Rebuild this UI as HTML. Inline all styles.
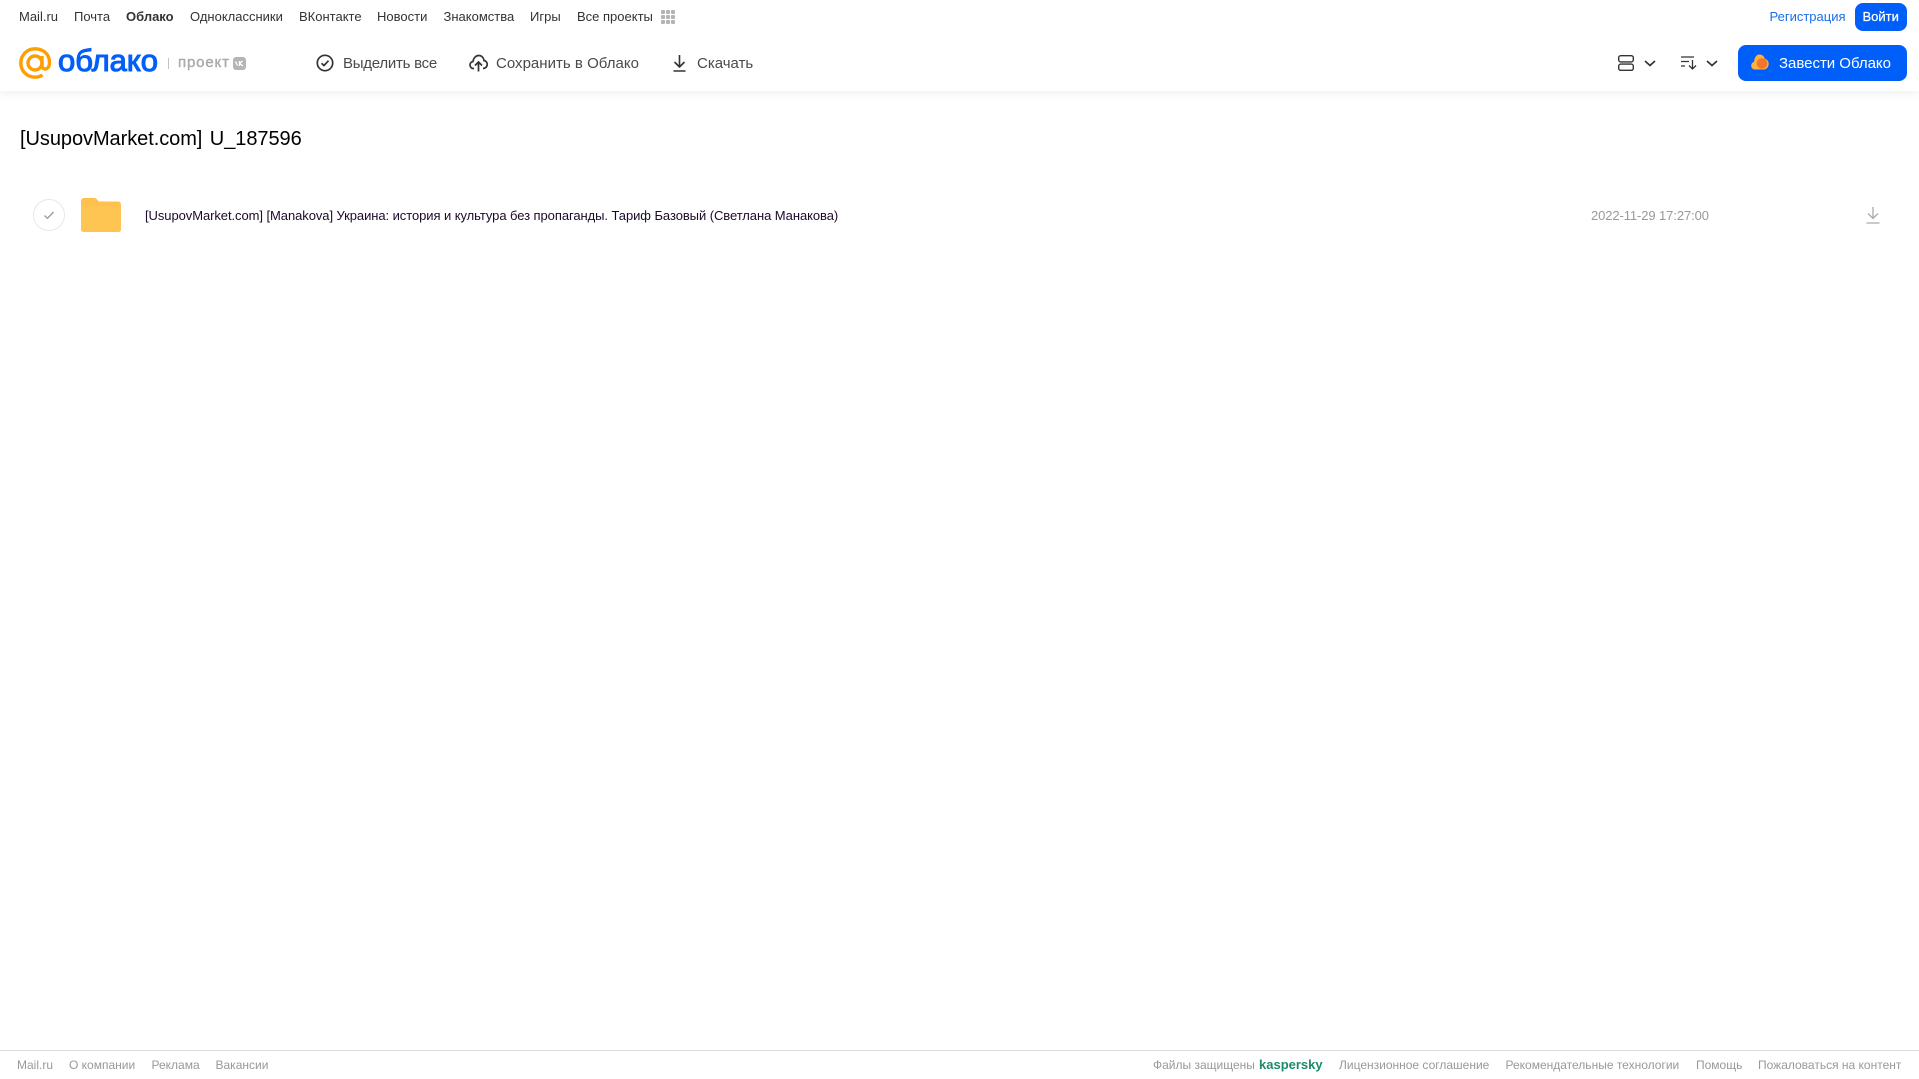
<!DOCTYPE html>
<html lang="ru"><head><meta charset="utf-8"><title>Облако</title>
<style>
html,body{margin:0;padding:0;background:#fff;width:1919px;height:1079px;overflow:hidden}
body{position:relative;font-family:"Liberation Sans",Arial,sans-serif}
.t{position:absolute;white-space:nowrap;line-height:18px}
.n{top:8px;font-size:13px;color:#333}
.b{top:55px;font-size:15px;color:#4a4a4a}
.f{top:1056px;font-size:12px;color:#999}
svg{position:absolute;overflow:visible}
#hd{position:absolute;left:0;top:0;width:1919px;height:91px;background:#fff;box-shadow:0 2px 10px rgba(0,0,0,.07)}
#ln{position:absolute;left:0;top:1050px;width:1919px;height:1px;background:#dcdcdc}
</style></head><body>
<div id="hd"></div>
<span class="t n" style="left:19px">Mail.ru</span>
<span class="t n" style="left:74px">Почта</span>
<span class="t n" style="left:126px;font-weight:bold">Облако</span>
<span class="t n" style="left:190px">Одноклассники</span>
<span class="t n" style="left:299px">ВКонтакте</span>
<span class="t n" style="left:377px">Новости</span>
<span class="t n" style="left:443.500px">Знакомства</span>
<span class="t n" style="left:530px">Игры</span>
<span class="t n" style="left:577px">Все проекты</span>
<svg style="left:661px;top:10px" width="15" height="15" fill="#b4b4b4"><rect width="4" height="4" rx="1"/><rect x="5" width="4" height="4" rx="1"/><rect x="10" width="4" height="4" rx="1"/><rect y="5" width="4" height="4" rx="1"/><rect x="5" y="5" width="4" height="4" rx="1"/><rect x="10" y="5" width="4" height="4" rx="1"/><rect y="10" width="4" height="4" rx="1"/><rect x="5" y="10" width="4" height="4" rx="1"/><rect x="10" y="10" width="4" height="4" rx="1"/></svg>

<svg style="left:19px;top:47px" width="33" height="33" fill="none" stroke="#ff9e00" stroke-width="3.400"><circle cx="16" cy="16" r="7"/><path d="M23 9v9.500c0 5 7.300 5 7.500-2.500C30.700 7.500 24.600 1.800 16 1.800 8 1.800 1.800 8 1.800 16S8 30.200 16 30.200c3 0 5.300-.7 7.500-2.100"/></svg>
<svg style="left:56px;top:44px" width="110" height="36"><text x="2" y="27" font-family="Liberation Sans" font-size="31" fill="#005ff9" stroke="#005ff9" stroke-width="1.100" textLength="100" lengthAdjust="spacingAndGlyphs">облако</text></svg>
<div style="position:absolute;left:168px;top:58px;width:1px;height:11px;background:#c4c4c4"></div>
<span class="t" style="left:178px;top:54px;font-size:15px;color:#a8abaf;-webkit-text-stroke:.4px #a8abaf;letter-spacing:.85px">проект</span>
<div style="position:absolute;left:233px;top:57px;width:13px;height:13px;border-radius:3px;background:#b3b5b8"></div>
<svg style="left:233px;top:57px" width="13" height="13" fill="none" stroke="#fff" stroke-width="1.300"><path d="M2.500 4.500 4.500 8.500M6.500 4v5M6.500 6.500 9.500 4M6.500 6.500 10 9"/></svg>

<svg style="left:316px;top:54px" width="18" height="18" fill="none" stroke="#333" stroke-width="1.700"><circle cx="9" cy="9" r="7.700"/><path d="M5.500 9.200 8 11.500l4.500-4.800"/></svg>
<span class="t b" style="left:343px;letter-spacing:-.25px">Выделить все</span>
<svg style="left:469px;top:54px" width="19" height="18" fill="none" stroke="#333" stroke-width="1.700"><path d="M5 14.500H4.500C2.500 14.500 1 13 1 11c0-1.800 1.300-3.200 3-3.500C4.500 4 6.800 1.500 9.700 1.500c2.900 0 5 2.200 5.300 5 2 .3 3.200 2 3.200 3.900 0 2.200-1.700 4.100-4.200 4.100"/><path d="M9.500 17.500V8.500M6 11.500l3.500-3.500 3.500 3.500"/></svg>
<span class="t b" style="left:496px;letter-spacing:.02px">Сохранить в Облако</span>
<svg style="left:672px;top:54px" width="15" height="18" fill="none" stroke="#333" stroke-width="1.600"><path d="M7.500 1v11.500M2.500 8l5 5 5-5M1.500 17h12"/></svg>
<span class="t b" style="left:697px">Скачать</span>

<svg style="left:1618px;top:55px" width="16" height="16" fill="none" stroke="#333" stroke-width="1.400"><rect x=".7" y=".7" width="14.600" height="6.200" rx="2"/><rect x=".7" y="9.100" width="14.600" height="6.200" rx="2"/></svg>
<svg style="left:1644px;top:60px" width="12" height="7" fill="none" stroke="#333" stroke-width="1.700"><path d="M1 1l5 4.500L11 1"/></svg>
<svg style="left:1681px;top:56px" width="16" height="14" fill="none" stroke="#333" stroke-width="1.300"><path d="M0 1h13M0 5.500h8M0 10h4M11.500 4v9M8 9.500l3.500 3.500L15 9.500"/></svg>
<svg style="left:1706px;top:60px" width="12" height="7" fill="none" stroke="#333" stroke-width="1.700"><path d="M1 1l5 4.500L11 1"/></svg>

<span class="t" style="left:1769.500px;top:8px;font-size:13px;color:#1a6fe8">Регистрация</span>
<div style="position:absolute;left:1855px;top:3px;width:52px;height:28px;border-radius:8px;background:#005ff9"></div>
<span class="t" style="left:1862.500px;top:8px;font-size:13px;color:#fff;-webkit-text-stroke:.25px #fff">Войти</span>
<div style="position:absolute;left:1738px;top:45px;width:169px;height:36px;border-radius:8px;background:#005ff9"></div>
<svg style="left:1751px;top:54px" width="18" height="16"><path d="M4 15.500c-2.200 0-3.800-1.700-3.800-3.900 0-1.800 1.200-3.300 2.800-3.700C3.400 3.500 5.500 .5 8.500 .5c2.800 0 4.800 1.800 5.300 4.300 2.200.3 3.900 2.600 3.900 5 0 3-2.100 5.700-4.800 5.700z" fill="#ffb03a"/><circle cx="11" cy="9.500" r="5.300" fill="#f4762c"/></svg>
<span class="t b" style="left:1779px;color:#fff;letter-spacing:-.02px">Завести Облако</span>

<span class="t" style="left:20px;top:127px;font-size:20px;line-height:24px;color:#000;letter-spacing:-.06px;word-spacing:2px">[UsupovMarket.com] U_187596</span>

<svg style="left:33px;top:199px" width="32" height="32" fill="none"><circle cx="16" cy="16" r="15.500" stroke="#e8e8e8"/><path d="M11.500 16.500 14.500 19.300l6-6.300" stroke="#999" stroke-width="1.300"/></svg>
<svg style="left:81px;top:198px" width="40" height="34"><path d="M0 3C0 1.300 1.300 0 3 0h10c1.500 0 2.500.7 3.500 2l1.500 1.500h19c1.700 0 3 1.300 3 3V31c0 1.700-1.300 3-3 3H3c-1.700 0-3-1.300-3-3z" fill="#ffc04d"/><rect y="8" width="40" height="26" rx="2.500" fill="#ffc552"/></svg>
<span class="t" style="left:145px;top:207px;font-size:13px;color:#1c0a2a;letter-spacing:-.07px">[UsupovMarket.com] [Manakova] Украина: история и культура без пропаганды. Тариф Базовый (Светлана Манакова)</span>
<span class="t" style="left:1591px;top:207px;font-size:13px;color:#999;letter-spacing:-.1px">2022-11-29 17:27:00</span>
<svg style="left:1866px;top:207px" width="14" height="17" fill="none" stroke="#aaa" stroke-width="1.300"><path d="M7 0v11M2 6.500 7 11.500 12 6.500M.5 16h13"/></svg>

<div id="ln"></div>
<span class="t f" style="left:17px">Mail.ru</span>
<span class="t f" style="left:69px">О компании</span>
<span class="t f" style="left:151.500px">Реклама</span>
<span class="t f" style="left:215.500px">Вакансии</span>
<span class="t f" style="left:1153px">Файлы защищены</span>
<span class="t f" style="left:1259px;font-size:13px;font-weight:bold;color:#1d8a6e">kaspersky</span>
<span class="t f" style="left:1339px">Лицензионное соглашение</span>
<span class="t f" style="left:1505.500px">Рекомендательные технологии</span>
<span class="t f" style="left:1696px">Помощь</span>
<span class="t f" style="left:1758px">Пожаловаться на контент</span>
</body></html>
